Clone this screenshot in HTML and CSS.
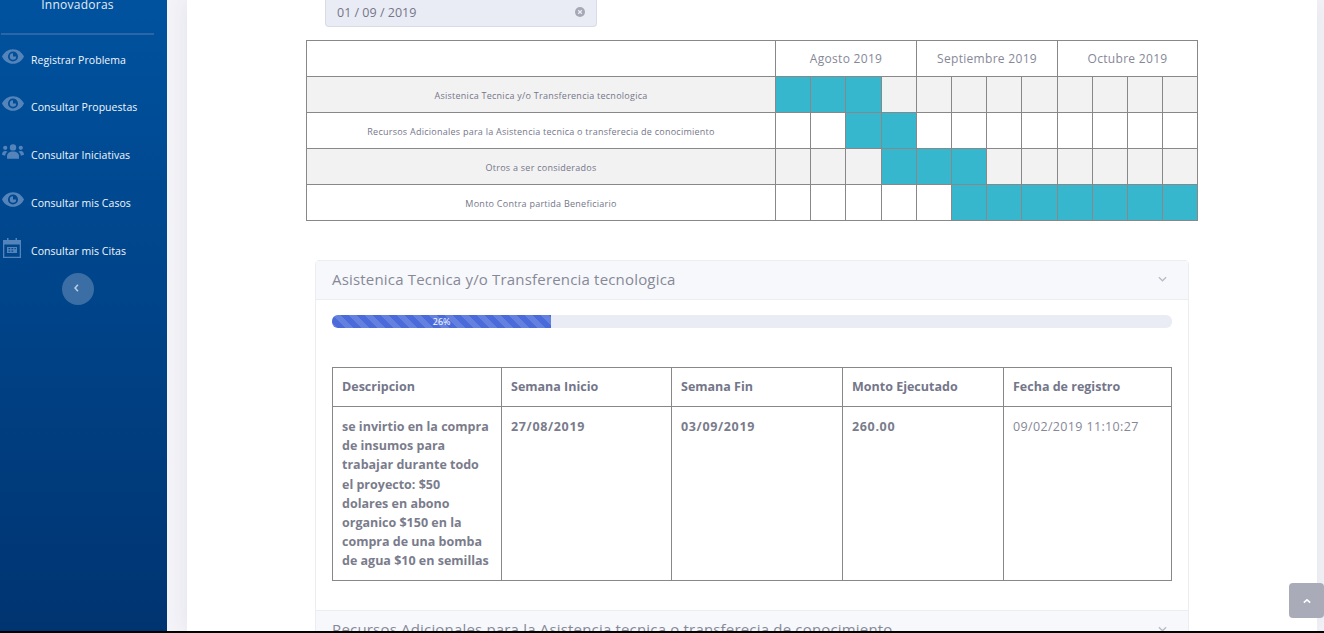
FILE: index.html
```html
<!DOCTYPE html>
<html lang="es">
<head>
    <meta charset="UTF-8">
    <title>Cronograma</title>
    <link rel="stylesheet" href="styles.css">
</head>
<body>
    <div class="layout">
        <!-- menu lateral -->
        <aside class="sidebar">
            <div class="brand">Innovadoras</div>
            <nav class="menu">
                <a class="menu-item">
                    <svg class="menu-icon" viewBox="0 0 24 16"><path fill-rule="evenodd" d="M12 0C6.500 0 2.200 3.500 0 8c2.200 4.500 6.500 8 12 8s9.800-3.500 12-8c-2.200-4.500-6.500-8-12-8zm0 2.500a5.500 5.500 0 1 1 0 11 5.500 5.500 0 0 1 0-11zm0 2a3.500 3.500 0 1 0 3.500 3.500h-3.500z"/></svg>
                    <span>Registrar Problema</span>
                </a>
                <a class="menu-item">
                    <svg class="menu-icon" viewBox="0 0 24 16"><path fill-rule="evenodd" d="M12 0C6.500 0 2.200 3.500 0 8c2.200 4.500 6.500 8 12 8s9.800-3.500 12-8c-2.200-4.500-6.500-8-12-8zm0 2.500a5.500 5.500 0 1 1 0 11 5.500 5.500 0 0 1 0-11zm0 2a3.500 3.500 0 1 0 3.500 3.500h-3.500z"/></svg>
                    <span>Consultar Propuestas</span>
                </a>
                <a class="menu-item">
                    <svg class="menu-icon" viewBox="0 0 24 16"><circle cx="12" cy="3.500" r="3.500"/><circle cx="3.500" cy="4" r="2.300"/><circle cx="20.500" cy="4" r="2.300"/><path d="M5.500 16v-3c0-3 2.500-5 6.500-5s6.500 2 6.500 5v3z"/><path d="M0 11.500C0 9 1.500 7.500 3.500 7.500c1 0 1.800.3 2.500.9-1.500 1-2.300 2.300-2.500 4.100z"/><path d="M24 11.500c0-2.500-1.500-4-3.500-4-1 0-1.800.3-2.500.9 1.500 1 2.300 2.300 2.500 4.100z"/></svg>
                    <span>Consultar Iniciativas</span>
                </a>
                <a class="menu-item">
                    <svg class="menu-icon" viewBox="0 0 24 16"><path fill-rule="evenodd" d="M12 0C6.500 0 2.200 3.500 0 8c2.200 4.500 6.500 8 12 8s9.800-3.500 12-8c-2.200-4.500-6.500-8-12-8zm0 2.500a5.500 5.500 0 1 1 0 11 5.500 5.500 0 0 1 0-11zm0 2a3.500 3.500 0 1 0 3.500 3.500h-3.500z"/></svg>
                    <span>Consultar mis Casos</span>
                </a>
                <a class="menu-item">
                    <svg class="menu-icon menu-icon-cal" viewBox="0 0 18 20"><path fill-rule="evenodd" d="M4 0h1.500v2h7V0H14v2h4v18H0V2h4zM1.300 6.500v12.200h15.400V6.500zM4 9h10v6H4zm1.500 1v1.300h1.700V10zm3 0v1.300h1.700V10zm3 0v1.300h1.300V10zm-6 2.500v1.300h1.700v-1.300zm3 0v1.300h1.700v-1.300z"/></svg>
                    <span>Consultar mis Citas</span>
                </a>
            </nav>
            <button class="collapse-btn">
                <svg viewBox="0 0 6 10"><path d="M4.800 1 1.200 5l3.600 4" fill="none" stroke="currentColor" stroke-width="2"/></svg>
            </button>
        </aside>

        <main class="content">
            <div class="card">
                <div class="date-field">
                    <span>01 / 09 / 2019</span>
                    <svg class="date-clear" viewBox="0 0 10 10"><circle cx="5" cy="5" r="5"/><path d="M3.200 3.200l3.600 3.600M6.800 3.200 3.200 6.800" stroke="#e9ecf4" stroke-width="1.300"/></svg>
                </div>

                <!-- cronograma -->
                <table class="gantt">
                    <colgroup>
                        <col class="gantt-name">
                        <col><col><col class="wide"><col>
                        <col><col><col><col class="wide">
                        <col><col><col><col>
                    </colgroup>
                    <tr class="gantt-head">
                        <th></th>
                        <th colspan="4">Agosto 2019</th>
                        <th colspan="4">Septiembre 2019</th>
                        <th colspan="4">Octubre 2019</th>
                    </tr>
                    <tr class="odd">
                        <td>Asistenica Tecnica y/o Transferencia tecnologica</td>
                        <td class="on"></td><td class="on"></td><td class="on"></td><td></td>
                        <td></td><td></td><td></td><td></td>
                        <td></td><td></td><td></td><td></td>
                    </tr>
                    <tr>
                        <td>Recursos Adicionales para la Asistencia tecnica o transferecia de conocimiento</td>
                        <td></td><td></td><td class="on"></td><td class="on"></td>
                        <td></td><td></td><td></td><td></td>
                        <td></td><td></td><td></td><td></td>
                    </tr>
                    <tr class="odd">
                        <td>Otros a ser considerados</td>
                        <td></td><td></td><td></td><td class="on"></td>
                        <td class="on"></td><td class="on"></td><td></td><td></td>
                        <td></td><td></td><td></td><td></td>
                    </tr>
                    <tr>
                        <td>Monto Contra partida Beneficiario</td>
                        <td></td><td></td><td></td><td></td>
                        <td></td><td class="on"></td><td class="on"></td><td class="on"></td>
                        <td class="on"></td><td class="on"></td><td class="on"></td><td class="on"></td>
                    </tr>
                </table>

                <!-- acordeon -->
                <div class="accordion">
                    <div class="acc-head">
                        <span>Asistenica Tecnica y/o Transferencia tecnologica</span>
                        <svg class="acc-arrow" viewBox="0 0 10 6"><path d="M1 1l4 4 4-4" fill="none" stroke="currentColor" stroke-width="1.500"/></svg>
                    </div>
                    <div class="acc-body">
                        <div class="progress">
                            <div class="progress-bar" style="width: 26.1%">26%</div>
                        </div>
                        <table class="detail">
                            <colgroup>
                                <col class="c1"><col class="c2"><col class="c3"><col class="c4"><col>
                            </colgroup>
                            <tr>
                                <th>Descripcion</th>
                                <th>Semana Inicio</th>
                                <th>Semana Fin</th>
                                <th>Monto Ejecutado</th>
                                <th>Fecha de registro</th>
                            </tr>
                            <tr>
                                <td class="desc">se invirtio en la compra<br>de insumos para<br>trabajar durante todo<br>el proyecto: $50<br>dolares en abono<br>organico $150 en la<br>compra de una bomba<br>de agua $10 en semillas</td>
                                <td class="strong">27/08/2019</td>
                                <td class="strong">03/09/2019</td>
                                <td class="strong">260.00</td>
                                <td class="stamp">09/02/2019 11:10:27</td>
                            </tr>
                        </table>
                    </div>
                    <div class="acc-head acc-next">
                        <span>Recursos Adicionales para la Asistencia tecnica o transferecia de conocimiento</span>
                        <svg class="acc-arrow" viewBox="0 0 10 6"><path d="M1 1l4 4 4-4" fill="none" stroke="currentColor" stroke-width="1.500"/></svg>
                    </div>
                </div>
            </div>
        </main>
    </div>

    <button class="to-top">
        <svg viewBox="0 0 10 6"><path d="M1 5l4-3.500L9 5" fill="none" stroke="currentColor" stroke-width="2"/></svg>
    </button>
    <div class="window-edge"></div>
</body>
</html>
```

FILE: styles.css
```css
html, body {
    height: 633px;
    margin: 0;
    overflow: hidden;
}

* {
    box-sizing: border-box;
}

body {
    font-family: "Open Sans", "DejaVu Sans", sans-serif;
    color: #74768a;
    background: #f3f3f8;
}

.layout {
    display: flex;
    height: 631px;
    overflow: hidden;
}

/* menu lateral */
.sidebar {
    width: 167px;
    flex-shrink: 0;
    background: linear-gradient(180deg, #00529f 0%, #003471 100%);
    color: #fff;
}

.brand {
    height: 35px;
    margin-right: 13px;
    margin-left: 1px;
    border-bottom: 2px solid #2a66a8;
    text-align: center;
    font-size: 12px;
    line-height: 10px;
    letter-spacing: 0.25px;
    color: #e4ecf5;
}

.menu {
    display: flex;
    flex-direction: column;
    margin-bottom: -1px;
}

.menu-item {
    display: flex;
    align-items: center;
    height: 48px;
    font-size: 10.500px;
    letter-spacing: 0.05px;
    color: #f2f6fb;
}

.menu-item span {
    margin-top: 2px;
}

.menu-item:first-child {
    height: 47px;
    padding-top: 1px;
}

.menu-icon {
    width: 22px;
    height: 15px;
    margin-left: 2px;
    margin-right: 7px;
    margin-top: -6px;
    fill: #5484ba;
}

.menu-icon-cal {
    width: 18px;
    height: 20px;
    margin-left: 3px;
    margin-right: 10px;
    margin-top: -4px;
}

.collapse-btn {
    display: flex;
    align-items: center;
    justify-content: center;
    width: 32px;
    height: 32px;
    margin: 0 0 0 62px;
    padding: 0;
    border: none;
    border-radius: 50%;
    background: #3a6ea5;
    color: #b9cde3;
}

.collapse-btn svg {
    width: 5px;
    height: 8px;
    margin-top: -3px;
    margin-left: -3px;
}

/* contenido */
.content {
    flex: 1;
    min-width: 0;
    padding-left: 20px;
    padding-right: 7px;
}

.card {
    height: 100%;
    background: #fff;
    padding-left: 119px;
    padding-right: 119px;
    box-shadow: 0 0 20px rgba(70, 70, 110, 0.09);
}

.date-field {
    display: flex;
    align-items: center;
    justify-content: space-between;
    width: 272px;
    height: 27px;
    margin-left: 19px;
    padding: 0 11px 2px;
    background: #e9ecf4;
    border: 1px solid #d8dbe6;
    border-top: none;
    border-radius: 0 0 4px 4px;
    font-size: 12.500px;
    color: #74768a;
}

.date-clear {
    width: 10px;
    height: 10px;
    fill: #a6a8b4;
}

/* cronograma */
.gantt {
    width: 892px;
    margin-top: 13px;
    border-collapse: collapse;
    table-layout: fixed;
}

.gantt col {
    width: 35px;
}

.gantt col.wide {
    width: 36px;
}

.gantt col.gantt-name {
    width: 469px;
}

.gantt th,
.gantt td {
    height: 36px;
    padding: 2px 0 0;
    border: 1px solid #888;
    text-align: center;
    font-weight: 400;
    font-size: 9px;
    letter-spacing: 0.25px;
}

.gantt .gantt-head th {
    padding-top: 0;
    font-size: 12px;
    letter-spacing: 0.3px;
    color: #868898;
}

.gantt .odd td {
    background: #f2f2f2;
}

.gantt td.on,
.gantt .odd td.on {
    background: #36b7cd;
}

/* acordeon */
.accordion {
    width: 874px;
    margin-top: 39px;
    margin-left: 9px;
    border: 1px solid #ebedf3;
    border-radius: 4px 4px 0 0;
}

.acc-head {
    display: flex;
    align-items: center;
    justify-content: space-between;
    height: 39px;
    padding: 0 21px 2px 16px;
    background: #f7f8fb;
    border-bottom: 1px solid #ebedf3;
    font-size: 15px;
    letter-spacing: 0.18px;
    color: #868898;
}

.acc-arrow {
    flex-shrink: 0;
    width: 9px;
    height: 6px;
    color: #b9bbc7;
}

.acc-body {
    padding: 15px 16px 29px;
}

.acc-next {
    border-top: 1px solid #ebedf3;
    border-bottom: none;
    white-space: nowrap;
}

.progress {
    height: 13px;
    border-radius: 6px;
    background: #e9ecf4;
    overflow: hidden;
}

.progress-bar {
    height: 100%;
    background-color: #4a6bd9;
    background-image: linear-gradient(45deg, rgba(255,255,255,0.15) 25%, transparent 25%, transparent 50%, rgba(255,255,255,0.15) 50%, rgba(255,255,255,0.15) 75%, transparent 75%, transparent);
    background-size: 16px 16px;
    color: #fff;
    font-size: 9px;
    line-height: 13px;
    text-align: center;
}

/* tabla de detalle */
.detail {
    width: 840px;
    margin-top: 39px;
    border-collapse: collapse;
    table-layout: fixed;
}

.detail th,
.detail td {
    padding: 10px 9px 9px;
    border: 1px solid #888;
    text-align: left;
    vertical-align: top;
    font-size: 12.500px;
    line-height: 19.200px;
    white-space: nowrap;
}

.detail th {
    height: 39px;
    padding: 9px;
    font-weight: 700;
    vertical-align: middle;
    color: #74768a;
}

.detail .desc,
.detail .strong {
    font-weight: 700;
    color: #7a7c8c;
}

.detail .strong {
    letter-spacing: 0.65px;
}

.detail .stamp {
    letter-spacing: 0.35px;
    color: #868898;
}

.detail .c1 { width: 169px; }
.detail .c2 { width: 170px; }
.detail .c3 { width: 171px; }
.detail .c4 { width: 161px; }

/* boton subir */
.to-top {
    position: fixed;
    right: 0;
    top: 583px;
    display: flex;
    align-items: center;
    justify-content: center;
    width: 35px;
    height: 35px;
    padding: 0;
    border: none;
    border-radius: 4px;
    background: #a9abb8;
    color: #fff;
}

.to-top svg {
    width: 8px;
    height: 6px;
}

.window-edge {
    height: 2px;
    background: #000;
}
```
